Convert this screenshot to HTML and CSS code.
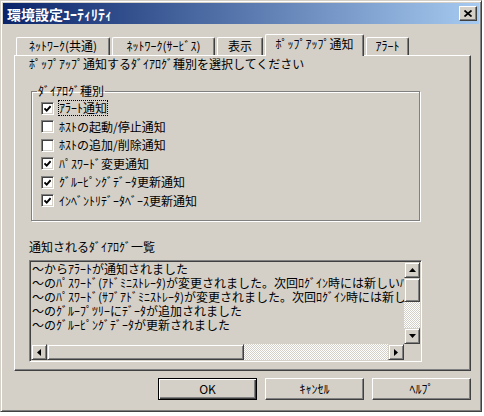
FILE: index.html
```html
<!DOCTYPE html>
<html lang="ja">
  <head>
    <meta charset="UTF-8" />
    <title>環境設定ﾕｰﾃｨﾘﾃｨ</title>
    <link rel="stylesheet" href="styles.css">
  </head>
  <body>
    <div class="window">
      <div class="titlebar">
        <span class="title">環境設定ﾕｰﾃｨﾘﾃｨ</span>
        <button class="close-btn">
          <svg width="8" height="7" viewBox="0 0 8 7"><path d="M0.5 0.5 L7.5 6.5 M7.5 0.5 L0.5 6.5" stroke="#000" stroke-width="1.7" fill="none"/></svg>
        </button>
      </div>

      <div class="content">
        <div class="tabs">
          <div class="tab">ﾈｯﾄﾜｰｸ(共通)</div>
          <div class="tab">ﾈｯﾄﾜｰｸ(ｻｰﾋﾞｽ)</div>
          <div class="tab">表示</div>
          <div class="tab active">ﾎﾟｯﾌﾟｱｯﾌﾟ通知</div>
          <div class="tab">ｱﾗｰﾄ</div>
        </div>

        <div class="panel">
          <div class="lead">ﾎﾟｯﾌﾟｱｯﾌﾟ通知するﾀﾞｲｱﾛｸﾞ種別を選択してください</div>

          <fieldset class="group">
            <legend>ﾀﾞｲｱﾛｸﾞ種別</legend>
            <div class="check-row"><span class="check on"></span><span class="label focus">ｱﾗｰﾄ通知</span></div>
            <div class="check-row"><span class="check"></span><span class="label">ﾎｽﾄの起動/停止通知</span></div>
            <div class="check-row"><span class="check"></span><span class="label">ﾎｽﾄの追加/削除通知</span></div>
            <div class="check-row"><span class="check on"></span><span class="label">ﾊﾟｽﾜｰﾄﾞ変更通知</span></div>
            <div class="check-row"><span class="check on"></span><span class="label">ｸﾞﾙｰﾋﾟﾝｸﾞﾃﾞｰﾀ更新通知</span></div>
            <div class="check-row"><span class="check on"></span><span class="label">ｲﾝﾍﾞﾝﾄﾘﾃﾞｰﾀﾍﾞｰｽ更新通知</span></div>
          </fieldset>

          <div class="list-label">通知されるﾀﾞｲｱﾛｸﾞ一覧</div>
          <div class="listbox">
            <div class="lines">
              <div>～からｱﾗｰﾄが通知されました</div>
              <div>～のﾊﾟｽﾜｰﾄﾞ(ｱﾄﾞﾐﾆｽﾄﾚｰﾀ)が変更されました。次回ﾛｸﾞｲﾝ時には新しいﾊﾟｽﾜｰﾄﾞを入力してください</div>
              <div>～のﾊﾟｽﾜｰﾄﾞ(ｻﾌﾞｱﾄﾞﾐﾆｽﾄﾚｰﾀ)が変更されました。次回ﾛｸﾞｲﾝ時には新しいﾊﾟｽﾜｰﾄﾞを入力してください</div>
              <div>～のｸﾞﾙｰﾌﾟﾂﾘｰにﾃﾞｰﾀが追加されました</div>
              <div>～のｸﾞﾙｰﾋﾟﾝｸﾞﾃﾞｰﾀが更新されました</div>
            </div>
            <div class="vscroll">
              <div class="sb-btn"><svg width="7" height="4" viewBox="0 0 7 4"><polygon points="3.5,0 7,4 0,4" fill="#000"/></svg></div>
              <div class="sb-thumb v"></div>
              <div class="sb-track"></div>
              <div class="sb-btn"><svg width="7" height="4" viewBox="0 0 7 4"><polygon points="0,0 7,0 3.5,4" fill="#000"/></svg></div>
            </div>
            <div class="hscroll">
              <div class="sb-btn"><svg width="4" height="7" viewBox="0 0 4 7"><polygon points="4,0 4,7 0,3.5" fill="#000"/></svg></div>
              <div class="sb-thumb h"></div>
              <div class="sb-track"></div>
              <div class="sb-btn"><svg width="4" height="7" viewBox="0 0 4 7"><polygon points="0,0 4,3.5 0,7" fill="#000"/></svg></div>
            </div>
            <div class="corner"></div>
          </div>
        </div>

        <div class="buttons">
          <button class="btn default">OK</button>
          <button class="btn">ｷｬﾝｾﾙ</button>
          <button class="btn">ﾍﾙﾌﾟ</button>
        </div>
      </div>
    </div>
  </body>
</html>
```

FILE: styles.css
```css
body {
  margin: 0;
  background: #fff;
  font-family: "Noto Sans CJK JP", "DejaVu Sans", sans-serif;
  font-size: 12px;
  line-height: 14px;
  color: #000;
}
.window {
  width: 482px;
  height: 412px;
  box-sizing: border-box;
  background: #d4d0c8;
  border: 1px solid;
  border-color: #d4d0c8 #404040 #404040 #d4d0c8;
  box-shadow: inset 1px 1px #fff, inset -1px -1px #808080;
  padding: 2px;
}
.titlebar {
  display: flex;
  justify-content: space-between;
  align-items: center;
  height: 21px;
  padding: 0 2px 0 4px;
  background: linear-gradient(to right, #0a246a, #a6caf0);
  color: #fff;
  font-weight: bold;
  font-size: 14px;
}
.close-btn {
  width: 18px;
  height: 15px;
  padding: 0;
  display: flex;
  align-items: center;
  justify-content: center;
  background: #d4d0c8;
  border: 1px solid;
  border-color: #fff #404040 #404040 #fff;
  box-shadow: inset -1px -1px #808080;
}
.content {
  padding: 10px 8px 0 11px;
}
.tabs {
  display: flex;
  align-items: flex-end;
  height: 21px;
  padding-left: 2px;
}
.tab {
  height: 18px;
  box-sizing: border-box;
  margin-right: 2px;
  text-align: center;
  line-height: 16px;
  border: 1px solid;
  border-bottom: none;
  border-color: #fff #404040 #fff #fff;
  border-radius: 2px 2px 0 0;
  box-shadow: inset -1px 0 #808080;
  white-space: nowrap;
}
.tab:nth-child(1) { width: 94px; }
.tab:nth-child(2) { width: 103px; }
.tab:nth-child(3) { width: 46px; }
.tab:nth-child(4) { width: 99px; }
.tab:nth-child(5) { width: 43px; }
.tab.active {
  height: 22px;
  margin-bottom: -1px;
  line-height: 18px;
  background: #d4d0c8;
  position: relative;
  z-index: 1;
}
.panel {
  width: 457px;
  height: 316px;
  box-sizing: border-box;
  border: 1px solid;
  border-color: #fff #404040 #404040 #fff;
  box-shadow: inset -1px -1px #808080;
  padding: 0 0 0 14px;
}
.lead {
  margin-top: 1px;
}
.group {
  width: 389px;
  box-sizing: border-box;
  margin: 13px 0 0 2px;
  padding: 1px 9px 10px;
  border: 1px solid #808080;
  box-shadow: inset 1px 1px #fff, 1px 1px #fff;
}
.group legend {
  padding: 0 1px;
  margin-left: -4px;
}
.check-row {
  display: flex;
  align-items: center;
  gap: 5px;
  height: 18.5px;
}
.check {
  width: 13px;
  height: 13px;
  box-sizing: border-box;
  background: #fff;
  border: 1px solid;
  border-color: #808080 #fff #fff #808080;
  box-shadow: inset 1px 1px #404040, inset -1px -1px #d4d0c8;
}
.check.on {
  background: #fff url("data:image/svg+xml;utf8,<svg xmlns='http://www.w3.org/2000/svg' width='7' height='7'><polyline points='0.5,3.3 2.7,5.6 6.6,1.2' stroke='black' stroke-width='1.9' fill='none'/></svg>") center no-repeat;
}
.label.focus {
  outline: 1px dotted #000;
  outline-offset: 0;
}
.list-label {
  margin-top: 19px;
}
.listbox {
  display: grid;
  grid-template-columns: 1fr 16px;
  grid-template-rows: 1fr 16px;
  width: 393px;
  height: 102px;
  box-sizing: border-box;
  margin-top: 6px;
  border: 1px solid;
  border-color: #808080 #fff #fff #808080;
  box-shadow: inset 1px 1px #404040, inset -1px -1px #d4d0c8;
  padding: 1px;
}
.lines {
  overflow: hidden;
  white-space: nowrap;
  padding-left: 1px;
}
.vscroll {
  display: flex;
  flex-direction: column;
}
.hscroll {
  display: flex;
}
.sb-btn {
  width: 16px;
  height: 16px;
  flex-shrink: 0;
  box-sizing: border-box;
  display: flex;
  align-items: center;
  justify-content: center;
  border: 1px solid;
  border-color: #d4d0c8 #404040 #404040 #d4d0c8;
  box-shadow: inset 1px 1px #fff, inset -1px -1px #808080;
}
.sb-thumb {
  box-sizing: border-box;
  border: 1px solid;
  border-color: #d4d0c8 #404040 #404040 #d4d0c8;
  box-shadow: inset 1px 1px #fff, inset -1px -1px #808080;
}
.sb-thumb.v {
  height: 24px;
}
.sb-thumb.h {
  width: 197px;
}
.sb-track {
  flex: 1;
  background-image: conic-gradient(#fff 25%, #d4d0c8 0 50%, #fff 0 75%, #d4d0c8 0);
  background-size: 2px 2px;
}
.buttons {
  display: flex;
  justify-content: flex-end;
  gap: 8px;
  width: 457px;
  margin-top: 7px;
}
.btn {
  width: 99px;
  height: 22px;
  padding: 0;
  font: inherit;
  color: #000;
  background: #d4d0c8;
  border: 1px solid;
  border-color: #fff #404040 #404040 #fff;
  box-shadow: inset -1px -1px #808080;
}
.btn.default {
  border: 1px solid #000;
  box-shadow: inset 1px 1px #fff, inset -1px -1px #404040, inset -2px -2px #808080;
}
```
